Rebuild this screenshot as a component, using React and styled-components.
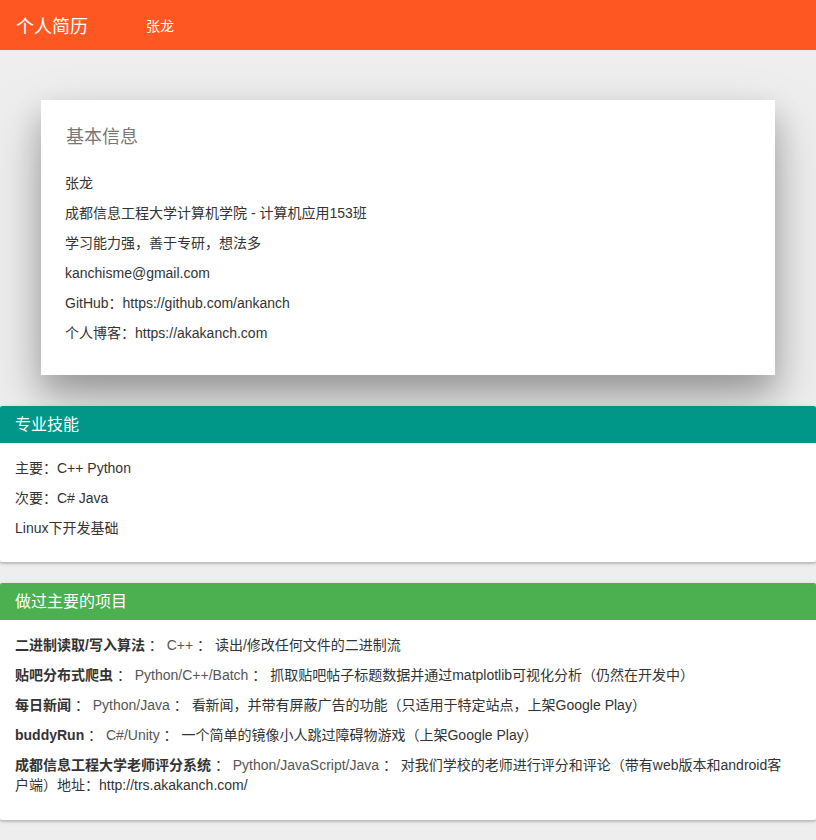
import React from 'react';
import styled, { createGlobalStyle } from 'styled-components';

const GlobalStyle = createGlobalStyle`
  html, body {
    margin: 0;
    padding: 0;
    background-color: #eeeeee;
    font-family: "Liberation Sans", Arial, "Noto Sans CJK SC", sans-serif;
    font-size: 14px;
    color: #333;
  }
`;

const Nav = styled.nav`
  height: 50px;
  background-color: #ff5722;
  display: flex;
  align-items: center;
  padding: 0 16px;
  color: #fff;
`;
const Brand = styled.div`
  font-size: 18px;
  width: 130px;
`;
const NavLink = styled.div`
  font-size: 14px;
`;

const Main = styled.div`
  padding-top: 50px;
  padding-bottom: 20px;
`;

const InfoCard = styled.div`
  margin: 0 41px 31px;
  background-color: #fff;
  padding: 24px 24px 22px;
  box-shadow: 0 16px 28px 0 rgba(0, 0, 0, 0.22), 0 25px 55px 0 rgba(0, 0, 0, 0.21);
`;
const InfoTitle = styled.h3`
  margin: 1px 0 24px 1px;
  font-size: 18px;
  font-weight: 400;
  line-height: 24px;
  color: #777;
`;

const Section = styled.div`
  background-color: #fff;
  border-radius: 2px;
  margin-bottom: 21px;
  box-shadow: 0 2px 2px 0 rgba(0, 0, 0, 0.14), 0 1px 5px 0 rgba(0, 0, 0, 0.12);
  overflow: hidden;
`;
const SectionHead = styled.div`
  height: 37px;
  box-sizing: border-box;
  display: flex;
  align-items: center;
  padding: 0 15px 3px;
  color: #fff;
  font-size: 16px;
  background-color: ${(p) => p.$color};
`;
const SectionBody = styled.div`
  padding: 15px 25px ${(p) => p.$bottom || 14}px 15px;
`;

const Line = styled.p`
  margin: 0 0 10px;
  line-height: 20px;
`;
const Label = styled.strong`
  font-weight: 700;
`;
const Tech = styled.span`
  color: #555;
`;

const projects = [
  ['二进制读取/写入算法', 'C++', '读出/修改任何文件的二进制流'],
  ['贴吧分布式爬虫', 'Python/C++/Batch', '抓取贴吧帖子标题数据并通过matplotlib可视化分析（仍然在开发中）'],
  ['每日新闻', 'Python/Java', '看新闻，并带有屏蔽广告的功能（只适用于特定站点，上架Google Play）'],
  ['buddyRun', 'C#/Unity', '一个简单的镜像小人跳过障碍物游戏（上架Google Play）'],
  ['成都信息工程大学老师评分系统', 'Python/JavaScript/Java', '对我们学校的老师进行评分和评论（带有web版本和android客户端）地址：http://trs.akakanch.com/'],
];

export default function App() {
  return (
    <>
      <GlobalStyle />
      <Nav>
        <Brand>个人简历</Brand>
        <NavLink>张龙</NavLink>
      </Nav>
      <Main>
        <InfoCard>
          <InfoTitle>基本信息</InfoTitle>
          <Line>张龙</Line>
          <Line>成都信息工程大学计算机学院 - 计算机应用153班</Line>
          <Line>学习能力强，善于专研，想法多</Line>
          <Line>kanchisme@gmail.com</Line>
          <Line>GitHub：https://github.com/ankanch</Line>
          <Line>个人博客：https://akakanch.com</Line>
        </InfoCard>

        <Section>
          <SectionHead $color="#009688">专业技能</SectionHead>
          <SectionBody $bottom={14}>
            <Line>主要：C++ Python</Line>
            <Line>次要：C# Java</Line>
            <Line>Linux下开发基础</Line>
          </SectionBody>
        </Section>

        <Section>
          <SectionHead $color="#4caf50">做过主要的项目</SectionHead>
          <SectionBody $bottom={15}>
            {projects.map(([name, tech, desc]) => (
              <Line key={name}>
                <Label>{name}</Label> ： <Tech>{tech}</Tech> ： {desc}
              </Line>
            ))}
          </SectionBody>
        </Section>
      </Main>
    </>
  );
}
